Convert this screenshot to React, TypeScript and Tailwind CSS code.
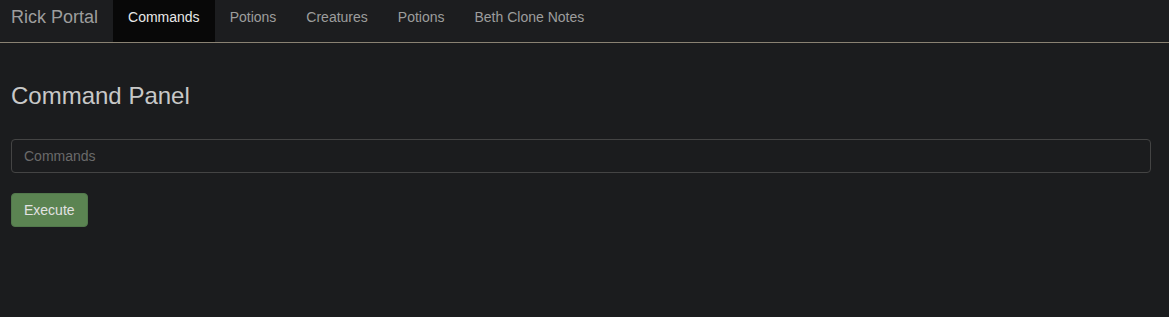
const navItems = ['Commands', 'Potions', 'Creatures', 'Potions', 'Beth Clone Notes']

export default function App() {
  return (
    <div className="min-h-[317px] bg-[#1b1c1e] font-['Liberation_Sans',Arial,sans-serif]">
      <nav className="flex h-[43px] items-stretch border-b border-[#8a8273] bg-[#1c1d1f]">
        <a className="flex items-center pb-[8px] pl-[11px] pr-[15px] text-[18px] text-[#9d9d9d]">Rick Portal</a>
        <ul className="flex">
          {navItems.map((item, i) => (
            <li key={i}>
              <a
                className={`flex h-[42px] items-center px-[15px] pb-[8px] text-[14px] ${
                  i === 0 ? 'bg-[#080808] text-[#e8e8e8]' : 'text-[#9d9d9d]'
                }`}
              >
                {item}
              </a>
            </li>
          ))}
        </ul>
      </nav>

      <div className="px-[11px]">
        <h2 className="mt-[40px] text-[24px] leading-[26px] text-[#c8c8c8]">Command Panel</h2>
        <input
          className="mt-[30px] block h-[34px] w-[1140px] rounded-[4px] border border-[#444] bg-transparent px-3 text-[14px] text-[#ccc] placeholder:text-[#6a6a6a] outline-none"
          placeholder="Commands"
        />
        <button className="mt-[20px] h-[34px] rounded-[4px] border border-[#52784c] bg-[#5b8452] px-3 text-[14px] text-[#e2e2e2]">
          Execute
        </button>
      </div>
    </div>
  )
}
